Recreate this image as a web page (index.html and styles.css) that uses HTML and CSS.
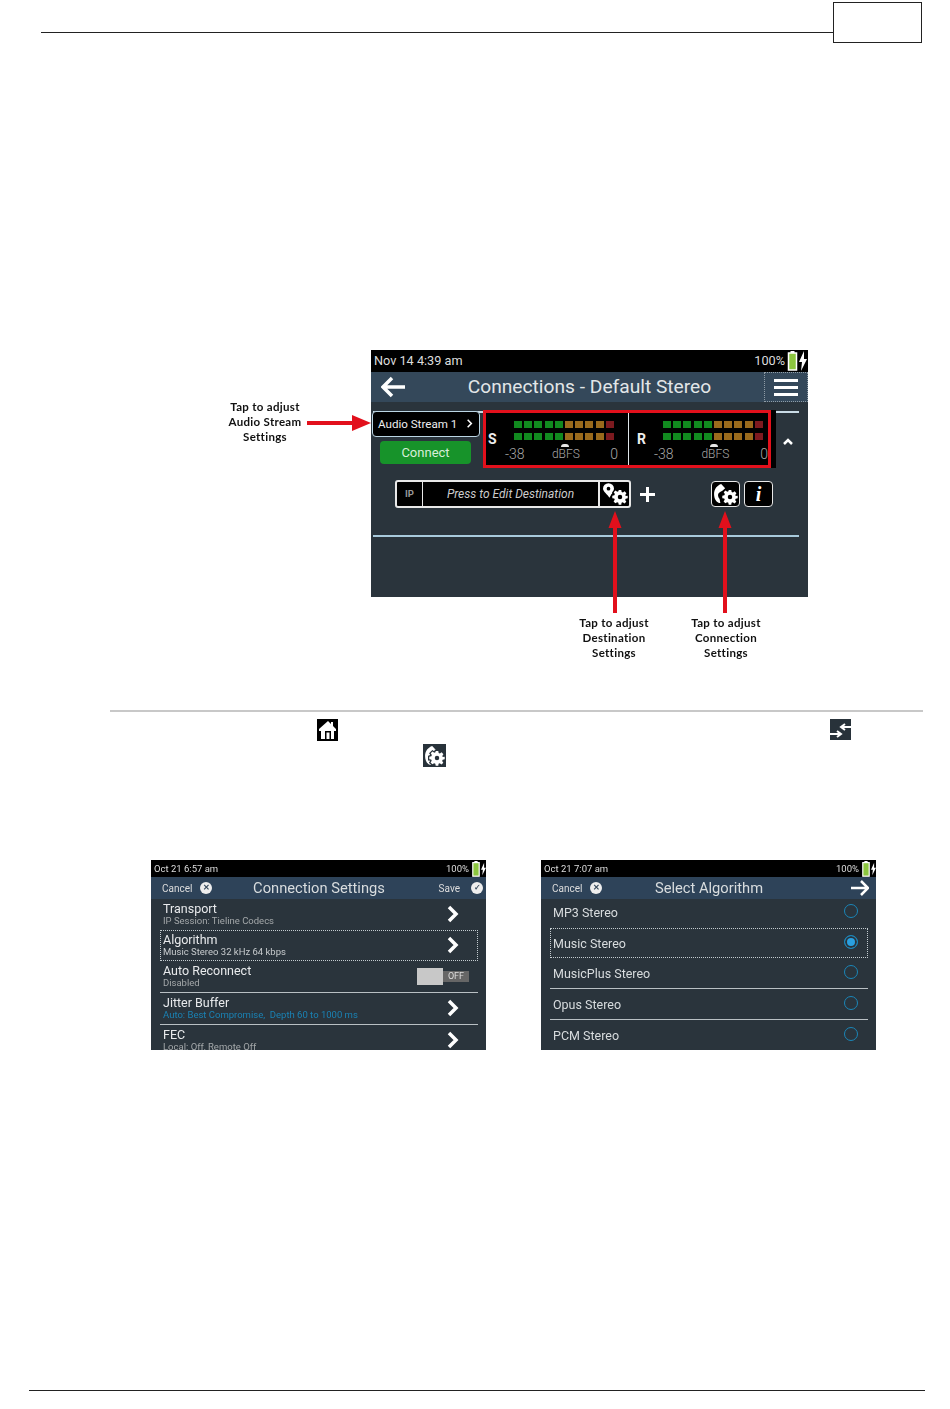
FILE: index.html
```html
<!DOCTYPE html>
<html lang="en">
<head>
  <meta charset="UTF-8">
  <title>Connections</title>
  <link rel="stylesheet" href="styles.css">
</head>
<body>

  <svg class="defs">
    <symbol id="gear" viewBox="-2 -2 28 28">
      <path fill-rule="evenodd" d="M10 1h4l.6 3.200 1.900.8 2.700-1.800 2.800 2.800-1.800 2.700.8 1.900L24 10v4l-3.200.6-.8 1.900 1.800 2.700-2.800 2.800-2.700-1.800-1.900.8L14 24h-4l-.6-3.200-1.900-.8-2.700 1.800-2.800-2.800 1.800-2.700-.8-1.900L0 14v-4l3.200-.6.8-1.900-1.800-2.700 2.800-2.800 2.700 1.800 1.900-.8zM12 8.500a3.500 3.500 0 1 0 0 7 3.500 3.500 0 0 0 0-7z"/>
    </symbol>
    <symbol id="phone" viewBox="0 0 15 24">
      <path d="M9 0l5 5.500-3.500 3C7 10 5 11.500 5 14c0 2 .8 3.500 2 5l1 5C3 24 0 18.500 0 12.500 0 6.500 4 1.500 9 0z"/>
    </symbol>
    <symbol id="chevron" viewBox="0 0 12 18">
      <path d="M2 2l7 7-7 7" fill="none" stroke="#fff" stroke-width="3.500"/>
    </symbol>
    <symbol id="battery" viewBox="0 0 10 20">
      <path d="M3 0h4v2H3z" fill="#fff"/>
      <rect x="1" y="2" width="8" height="17" fill="#8cc63f" stroke="#fff" stroke-width="1.500"/>
    </symbol>
    <symbol id="bolt" viewBox="0 0 8 20">
      <path d="M5 0L0 11h3l-1 9 6-12H5z" fill="#fff"/>
    </symbol>
  </svg>

  <header class="head">
    <div class="head-rule"></div>
    <div class="head-box"></div>
  </header>

  <!-- main connections screenshot -->
  <div class="shot">
    <div class="status">
      <span>Nov 14 4:39 am</span>
      <span class="status-right">100%<svg class="battery"><use href="#battery"/></svg><svg class="bolt"><use href="#bolt"/></svg></span>
    </div>
    <div class="titlebar">
      <svg class="back" viewBox="0 0 24 22"><path d="M11 2L2 11l9 9M3 11h21" fill="none" stroke="#fff" stroke-width="3.500"/></svg>
      <div class="title">Connections - Default Stereo</div>
      <div class="menu"><i></i><i></i><i></i></div>
    </div>
    <div class="shot-body">
      <div class="stream-row">
        <div class="stream-left">
          <div class="stream-btn"><span>Audio Stream 1</span><svg class="stream-chev" viewBox="0 0 12 18"><path d="M3 3l6 6-6 6" fill="none" stroke="#fff" stroke-width="2.500"/></svg></div>
          <div class="connect">Connect</div>
        </div>
        <div class="meters-back">
          <div class="meters">
            <div class="meter">
              <div class="meter-top"><b class="meter-name">S</b><div class="bars"><div class="bar"></div><div class="bar"></div></div></div>
              <div class="scale"><span>-38</span><span class="dbfs">dBFS</span><span>0</span></div>
            </div>
            <div class="meter meter-r">
              <div class="meter-top"><b class="meter-name">R</b><div class="bars"><div class="bar"></div><div class="bar"></div></div></div>
              <div class="scale"><span>-38</span><span class="dbfs">dBFS</span><span>0</span></div>
            </div>
          </div>
        </div>
        <svg class="caret" viewBox="0 0 12 8"><path d="M2 7l4-4 4 4" fill="none" stroke="#fff" stroke-width="2.500"/></svg>
      </div>
      <div class="dest-row">
        <div class="dest">
          <div class="dest-ip">IP</div>
          <div class="dest-text">Press to Edit Destination</div>
          <div class="dest-icon">
            <svg class="pin" viewBox="0 0 12 16"><path fill-rule="evenodd" d="M6 0a6 6 0 0 1 6 6c0 3-3 6-5 10C5 12 0 9 0 6a6 6 0 0 1 6-6zm0 4a2 2 0 1 0 0 4 2 2 0 0 0 0-4z" fill="#fff"/></svg>
            <svg class="gear"><use href="#gear"/></svg>
          </div>
        </div>
        <div class="plus"></div>
        <div class="icon-btn">
          <svg class="phone"><use href="#phone"/></svg>
          <svg class="gear"><use href="#gear"/></svg>
        </div>
        <div class="icon-btn info">i</div>
      </div>
      <div class="shot-rule"></div>
    </div>

    <!-- annotations -->
    <div class="note note-stream">Tap to adjust<br>Audio Stream<br>Settings</div>
    <svg class="arrow-h" viewBox="0 0 64 16"><path d="M0 6h45V0l19 8-19 8v-6H0z" fill="#e2101c"/></svg>
    <svg class="arrow-v arrow-dest" viewBox="0 0 14 102"><path d="M7 0l6.500 17H9v85H5V17H.5z" fill="#e2101c"/></svg>
    <svg class="arrow-v arrow-conn" viewBox="0 0 14 102"><path d="M7 0l6.500 17H9v85H5V17H.5z" fill="#e2101c"/></svg>
    <div class="note note-dest">Tap to adjust<br>Destination<br>Settings</div>
    <div class="note note-conn">Tap to adjust<br>Connection<br>Settings</div>
  </div>

  <div class="rule"></div>

  <div class="inline-icons">
    <div class="inline home">
      <svg viewBox="0 0 21 22"><path fill-rule="evenodd" d="M11 2l3 3V3h2v4l3 3v2h-2v8H4v-8H2v-2zM8 12v8h6v-8z" fill="#fff"/><path d="M9.500 13.500h3V20h-3z" fill="#fff"/></svg>
    </div>
    <div class="inline swap">
      <svg viewBox="0 0 21 21"><path d="M21 8h-9M15 5l-4 3 4 3M0 15h10M7 12l4 3-4 3" fill="none" stroke="#fff" stroke-width="2"/></svg>
    </div>
  </div>
  <div class="inline conn-icon">
    <svg class="phone"><use href="#phone"/></svg>
    <svg class="gear"><use href="#gear"/></svg>
  </div>

  <div class="screens">
    <div class="screen">
      <div class="status status-sm">
        <span>Oct 21 6:57 am</span>
        <span class="status-right">100%<svg class="battery"><use href="#battery"/></svg><svg class="bolt"><use href="#bolt"/></svg></span>
      </div>
      <div class="bar-sm">
        <div class="bar-side"><span>Cancel</span><span class="round">&#10005;</span></div>
        <div class="bar-title">Connection Settings</div>
        <div class="bar-side bar-save"><span>Save</span><span class="round">&#10003;</span></div>
      </div>
      <div class="rows">
        <div class="row">
          <div><div class="row-name">Transport</div><div class="row-sub">IP Session: Tieline Codecs</div></div>
          <svg class="chev"><use href="#chevron"/></svg>
        </div>
        <div class="row row-focus">
          <div><div class="row-name">Algorithm</div><div class="row-sub row-light">Music Stereo 32 kHz 64 kbps</div></div>
          <svg class="chev"><use href="#chevron"/></svg>
        </div>
        <div class="row row-line">
          <div><div class="row-name">Auto Reconnect</div><div class="row-sub">Disabled</div></div>
          <div class="toggle"><div class="toggle-knob"></div><div class="toggle-off">OFF</div></div>
        </div>
        <div class="row row-line">
          <div><div class="row-name">Jitter Buffer</div><div class="row-sub row-blue">Auto: Best Compromise,&nbsp; Depth 60 to 1000 ms</div></div>
          <svg class="chev"><use href="#chevron"/></svg>
        </div>
        <div class="row">
          <div><div class="row-name">FEC</div><div class="row-sub">Local: Off, Remote Off</div></div>
          <svg class="chev"><use href="#chevron"/></svg>
        </div>
      </div>
    </div>

    <div class="screen">
      <div class="status status-sm">
        <span>Oct 21 7:07 am</span>
        <span class="status-right">100%<svg class="battery"><use href="#battery"/></svg><svg class="bolt"><use href="#bolt"/></svg></span>
      </div>
      <div class="bar-sm">
        <div class="bar-side"><span>Cancel</span><span class="round">&#10005;</span></div>
        <div class="bar-title">Select Algorithm</div>
        <div class="bar-side bar-save">
          <svg class="next" viewBox="0 0 18 16"><path d="M10 1l7 7-7 7M16 8H0" fill="none" stroke="#fff" stroke-width="2.500"/></svg>
        </div>
      </div>
      <div class="rows">
        <div class="opt opt-first">MP3 Stereo<span class="radio"></span></div>
        <div class="opt opt-focus row-focus">Music Stereo<span class="radio radio-on"></span></div>
        <div class="opt row-line">MusicPlus Stereo<span class="radio"></span></div>
        <div class="opt row-line">Opus Stereo<span class="radio"></span></div>
        <div class="opt row-line">PCM Stereo<span class="radio"></span></div>
      </div>
    </div>
  </div>

  <div class="foot"></div>

</body>
</html>
```

FILE: styles.css
```css
* {
  margin: 0;
  padding: 0;
  box-sizing: border-box;
}

body {
  width: 950px;
  height: 1409px;
  background: #fff;
  font-family: Roboto, sans-serif;
  overflow: hidden;
}

.defs {
  display: none;
}

.head {
  display: flex;
  margin: 2px 28px 0 41px;
}

.head-rule {
  flex: 1;
  height: 31px;
  border-bottom: 1px solid #222;
}

.head-box {
  width: 89px;
  height: 41px;
  border: 1px solid #222;
}

/* main screenshot */
.shot {
  position: relative;
  width: 437px;
  height: 247px;
  margin: 307px 0 0 371px;
  background: #2a343c;
  color: #e4e8ea;
  filter: blur(.3px);
}

.status {
  display: flex;
  justify-content: space-between;
  align-items: center;
  height: 22px;
  padding: 0 1px 1px 3px;
  background: #000;
  font-size: 12.700px;
  color: #ddd;
}

.status-right {
  display: flex;
  align-items: center;
}

.battery {
  width: 11px;
  height: 20px;
  margin-left: 2px;
}

.bolt {
  width: 8px;
  height: 20px;
  margin-left: 1px;
}

.titlebar {
  display: grid;
  grid-template-columns: 1fr auto 1fr;
  align-items: center;
  height: 30px;
  background: #34485a;
}

.back {
  width: 24px;
  height: 22px;
  margin-left: 10px;
}

.title {
  padding-bottom: 2px;
  font-size: 19.200px;
  color: #e2e6e8;
}

.menu {
  justify-self: end;
  display: flex;
  flex-direction: column;
  justify-content: center;
  gap: 4px;
  width: 44px;
  height: 30px;
  padding: 0 9px;
  border: 1px dotted #8f9ca6;
}

.menu i {
  height: 3px;
  background: #fff;
}

.shot-body {
  height: 195px;
}

.stream-row {
  display: flex;
  align-items: flex-start;
  margin: 9px 9px 0 2px;
  border-top: 2px solid #c9dbe6;
}

.stream-left {
  width: 110px;
  margin: -2px 0 0 -1px;
}

.stream-btn {
  display: flex;
  justify-content: space-between;
  align-items: center;
  width: 108px;
  height: 26px;
  padding: 0 5px 1px 5px;
  background: #000;
  border: 1px solid #bcd6e4;
  border-radius: 4px;
  font-size: 11.600px;
  color: #eee;
}

.stream-chev {
  width: 9px;
  height: 11px;
}

.connect {
  width: 91px;
  height: 23px;
  margin: 4px 0 0 8px;
  background: #17932a;
  border-radius: 4px;
  font-size: 13px;
  line-height: 23px;
  text-align: center;
  color: #d8eed8;
}

.meters-back {
  margin: -3px 0 0 1px;
  padding-right: 5px;
  background: #000;
}

.meters {
  display: flex;
  width: 288px;
  height: 58px;
  border: 3px solid #e2101c;
}

.meter {
  width: 143px;
  border-right: 1px solid #dfe6ea;
}

.meter-r {
  width: 139px;
  padding-left: 6px;
  border-right: 0;
}

.meter-top {
  display: flex;
  align-items: flex-end;
  height: 27px;
  padding-top: 7px;
}

.meter-name {
  width: 28px;
  padding-left: 2px;
  font-size: 14px;
  line-height: 14px;
  margin-bottom: -6px;
  color: #eee;
}

.bars {
  display: flex;
  flex-direction: column;
  gap: 5px;
}

.bar {
  width: 101px;
  height: 7px;
  background:
    repeating-linear-gradient(90deg, transparent 0 8px, #000 8px 10.200px),
    linear-gradient(90deg, #11891f 0 50%, #9a6a1c 50% 90%, #7d1a1f 90%);
}

.scale {
  display: flex;
  justify-content: space-between;
  padding: 6px 10px 0 19px;
  font-size: 14px;
  font-weight: 300;
  line-height: 16px;
  color: #a8a8a8;
}

.meter-r .scale {
  padding-right: 0;
}

.dbfs {
  position: relative;
  right: 1.500px;
  font-size: 12px;
}

.dbfs::before {
  content: "";
  position: absolute;
  top: -2px;
  left: 9px;
  width: 8px;
  height: 3px;
  border-radius: 4px 4px 0 0;
  background: #e6e6e6;
}

.caret {
  width: 12px;
  height: 8px;
  margin: 24px 0 0 6px;
}

.dest-row {
  display: flex;
  align-items: center;
  margin: 12px 0 0 24px;
}

.dest {
  display: flex;
  width: 236px;
  height: 28px;
  background: #000;
  border: 2px solid #e8e8e8;
  border-radius: 3px;
}

.dest-ip {
  width: 26px;
  border-right: 1px solid #e8e8e8;
  font-size: 9.500px;
  font-weight: 700;
  line-height: 24px;
  text-align: center;
  color: #999;
}

.dest-text {
  width: 175px;
  font-size: 12px;
  font-style: italic;
  line-height: 24px;
  text-align: center;
  color: #ccc;
}

.dest-icon {
  position: relative;
  flex: 1;
  border-left: 2px solid #e8e8e8;
}

.pin {
  position: absolute;
  top: 1px;
  left: 3px;
  width: 11px;
  height: 15px;
}

.gear {
  position: absolute;
  right: 0;
  bottom: 0;
  width: 18px;
  height: 18px;
  fill: #fff;
  stroke: #000;
  stroke-width: 4px;
  paint-order: stroke;
}

.plus {
  position: relative;
  width: 15px;
  height: 15px;
  margin-left: 9px;
  background:
    linear-gradient(#fff, #fff) center / 15px 3px no-repeat,
    linear-gradient(#fff, #fff) center / 3px 15px no-repeat;
}

.icon-btn {
  position: relative;
  width: 29px;
  height: 26px;
  margin-left: 56px;
  background: #000;
  border: 1px solid #e8e8e8;
  border-radius: 4px;
}

.phone {
  position: absolute;
  top: 2px;
  left: 2px;
  width: 12px;
  height: 19px;
  fill: #fff;
}

.info {
  margin-left: 4px;
  font-family: "Liberation Serif", serif;
  font-size: 20px;
  font-style: italic;
  font-weight: 700;
  line-height: 24px;
  text-align: center;
  color: #fff;
}

.shot-rule {
  height: 2px;
  margin: 27px 9px 0 2px;
  background: #a8cadc;
}

/* annotations */
.note {
  position: absolute;
  font-family: Lato, sans-serif;
  font-size: 11.500px;
  font-weight: 700;
  line-height: 15.200px;
  letter-spacing: .3px;
  text-align: center;
  color: #111;
  width: 100px;
}

.note-stream {
  top: 49px;
  left: -156px;
}

.note-dest {
  top: 265px;
  left: 193px;
}

.note-conn {
  top: 265px;
  left: 305px;
}

.arrow-h {
  position: absolute;
  top: 65px;
  left: -64px;
  width: 64px;
  height: 16px;
}

.arrow-v {
  position: absolute;
  top: 161px;
  width: 14px;
  height: 102px;
}

.arrow-dest {
  left: 237px;
}

.arrow-conn {
  left: 347px;
}

.rule {
  height: 2px;
  margin: 113px 27px 0 110px;
  background: #c8c8c8;
}

.inline-icons {
  display: flex;
  justify-content: space-between;
  width: 534px;
  margin: 7px 0 0 317px;
}

.inline {
  position: relative;
  flex: none;
}

.inline svg {
  display: block;
}

.home {
  width: 21px;
  height: 22px;
  background: #000;
}

.swap {
  width: 21px;
  height: 21px;
  background: #28323a;
}

.conn-icon {
  width: 23px;
  height: 23px;
  margin: 3px 0 0 423px;
  background: #28323a;
}

.conn-icon .gear {
  stroke: #28323a;
}

/* small screenshots */
.screens {
  display: flex;
  gap: 55px;
  margin: 93px 0 0 151px;
}

.screen {
  width: 335px;
  height: 190px;
  overflow: hidden;
  background: #2a343c;
  color: #e4e8ea;
  filter: blur(.3px);
}

.status-sm {
  height: 17px;
  padding: 0 0 0 3px;
  font-size: 9.500px;
}

.status-sm .battery {
  width: 10px;
  height: 16px;
}

.status-sm .bolt {
  width: 5px;
  height: 14px;
  margin: 0;
}

.bar-sm {
  display: grid;
  grid-template-columns: 1fr auto 1fr;
  align-items: center;
  height: 22px;
  padding: 0 3px 0 11px;
  background: #2e4359;
}

.bar-side {
  display: flex;
  align-items: center;
  gap: 8px;
  font-size: 10px;
  color: #ddd;
}

.bar-save {
  justify-content: flex-end;
  gap: 11px;
  padding-right: 0;
}

.bar-title {
  margin-right: 7px;
  font-size: 14.700px;
  color: #d8dcde;
}

.round {
  width: 12px;
  height: 12px;
  background: #eee;
  border-radius: 50%;
  font-size: 8px;
  font-weight: 700;
  line-height: 12px;
  text-align: center;
  color: #34485a;
}

.next {
  width: 18px;
  height: 16px;
  margin-right: 4px;
}

.rows {
  margin: 0 8px 0 9px;
}

.row {
  display: flex;
  justify-content: space-between;
  align-items: center;
  height: 31px;
  padding: 0 15px 2px 3px;
}

.row-focus {
  outline: 1px dotted #c4ccd0;
  outline-offset: -1px;
}

.row-line {
  border-bottom: 1px solid #b9c0c4;
}

.row.row-line {
  height: 32px;
}

.row-name {
  font-size: 12.500px;
  line-height: 13px;
  color: #e8eaec;
}

.row-sub {
  font-size: 9.500px;
  line-height: 11px;
  color: #a4a8aa;
}

.row-light {
  color: #c8ccce;
}

.row-blue {
  color: #1a82b4;
}

.chev {
  width: 12px;
  height: 18px;
  margin-right: 4px;
}

.toggle {
  display: flex;
  align-items: center;
  margin: 2px -6px 0 0;
}

.toggle-knob {
  width: 26px;
  height: 17px;
  background: #c8c8c8;
}

.toggle-off {
  width: 26px;
  height: 11px;
  background: #666;
  font-size: 9px;
  line-height: 11px;
  text-align: center;
  color: #ddd;
}

.opt {
  display: flex;
  justify-content: space-between;
  align-items: center;
  height: 31px;
  padding: 0 10px 0 3px;
  font-size: 12.500px;
  color: #d8dcde;
}

.opt-first {
  height: 29px;
  padding-bottom: 3px;
}

.opt-focus {
  height: 30px;
}

.radio {
  width: 14px;
  height: 14px;
  margin-bottom: 2px;
  border: 1.500px solid #1a86b8;
  border-radius: 50%;
}

.radio-on {
  background: #2aa0e0;
  box-shadow: inset 0 0 0 2px #2a343c;
}

.foot {
  height: 1px;
  margin: 340px 25px 0 29px;
  background: #222;
}
```
